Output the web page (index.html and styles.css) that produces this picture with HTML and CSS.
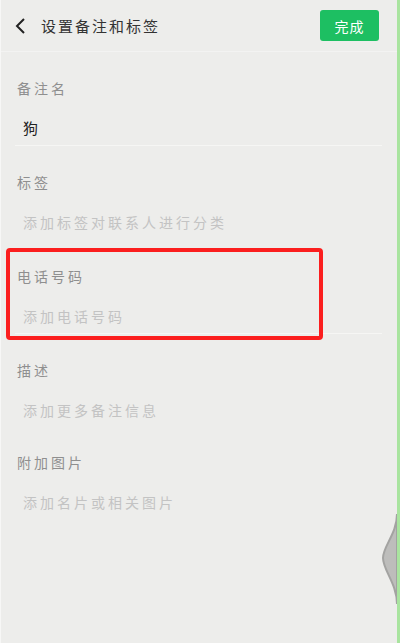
FILE: index.html
```html
<!DOCTYPE html>
<html lang="zh">
<head>
<meta charset="utf-8">
<title>设置备注和标签</title>
<link rel="stylesheet" href="styles.css">
</head>
<body>
<div class="app">
  <header class="topbar">
    <svg class="back" width="12" height="18" viewBox="0 0 12 18"><path d="M10 2 L3 9 L10 16" fill="none" stroke="#222" stroke-width="2"/></svg>
    <div class="title">设置备注和标签</div>
    <button class="done">完成</button>
  </header>
  <main class="form">
    <section class="field">
      <div class="label">备注名</div>
      <div class="value">狗</div>
    </section>
    <section class="field nodiv">
      <div class="label">标签</div>
      <div class="value placeholder">添加标签对联系人进行分类</div>
    </section>
    <section class="field marked">
      <div class="label">电话号码</div>
      <div class="value placeholder">添加电话号码</div>
      <div class="highlight"></div>
    </section>
    <section class="field nodiv">
      <div class="label">描述</div>
      <div class="value placeholder">添加更多备注信息</div>
    </section>
    <section class="field nodiv last">
      <div class="label">附加图片</div>
      <div class="value placeholder">添加名片或相关图片</div>
    </section>
  </main>
  <svg class="bulge" width="16" height="90" viewBox="0 0 16 90"><path d="M16 0 C16 20 2 32 2 44 C2 56 16 70 16 90 Z" fill="#bdbdbb" stroke="#a3a3a1" stroke-width="2"/></svg>
</div>
</body>
</html>
```
FILE: styles.css
```css
html, body {
  margin: 0;
  padding: 0;
}
body {
  background: #ededeb;
  font-family: "Noto Sans CJK SC", "Noto Sans", sans-serif;
}
.app {
  position: relative;
  width: 396px;
  height: 643px;
  background: #ededeb;
  border-left: 1px solid #f7f7f6;
  border-right: 3px solid #a9e49f;
  overflow: hidden;
}
.topbar {
  height: 51px;
  display: flex;
  align-items: center;
  padding: 0 18px 0 13px;
  border-bottom: 1px solid #f3f3f2;
}
.back {
  flex: none;
  margin-top: 1px;
}
.title {
  flex: 1;
  margin-left: 15px;
  font-size: 15px;
  letter-spacing: 2px;
  color: #333;
}
.done {
  width: 59px;
  height: 31px;
  border: none;
  border-radius: 3px;
  background: #1dbf62;
  color: #fff;
  font-family: inherit;
  font-size: 14px;
  letter-spacing: 1px;
  padding: 0;
}
.form {
  display: flex;
  flex-direction: column;
}
.field {
  position: relative;
  margin: 0 15px 0 14px;
  padding: 26px 0 7px 0;
  border-bottom: 1px solid #f6f6f4;
  display: flex;
  flex-direction: column;
  gap: 20px;
}
.field.nodiv {
  border-bottom-color: transparent;
}
.field.last {
  padding-top: 24px;
}
.label {
  height: 20px;
  line-height: 20px;
  padding-left: 2px;
  font-size: 14px;
  letter-spacing: 3px;
  color: #8f8f8f;
}
.value {
  height: 20px;
  line-height: 20px;
  padding-left: 8px;
  font-size: 15px;
  color: #222;
}
.placeholder {
  font-size: 14px;
  letter-spacing: 3px;
  color: #c3c3c3;
}
.highlight {
  position: absolute;
  left: -9px;
  top: 8px;
  width: 309px;
  height: 84px;
  border: 4px solid #fb1e1e;
  border-radius: 4px;
}
.bulge {
  position: absolute;
  right: 0;
  top: 514px;
}
```
